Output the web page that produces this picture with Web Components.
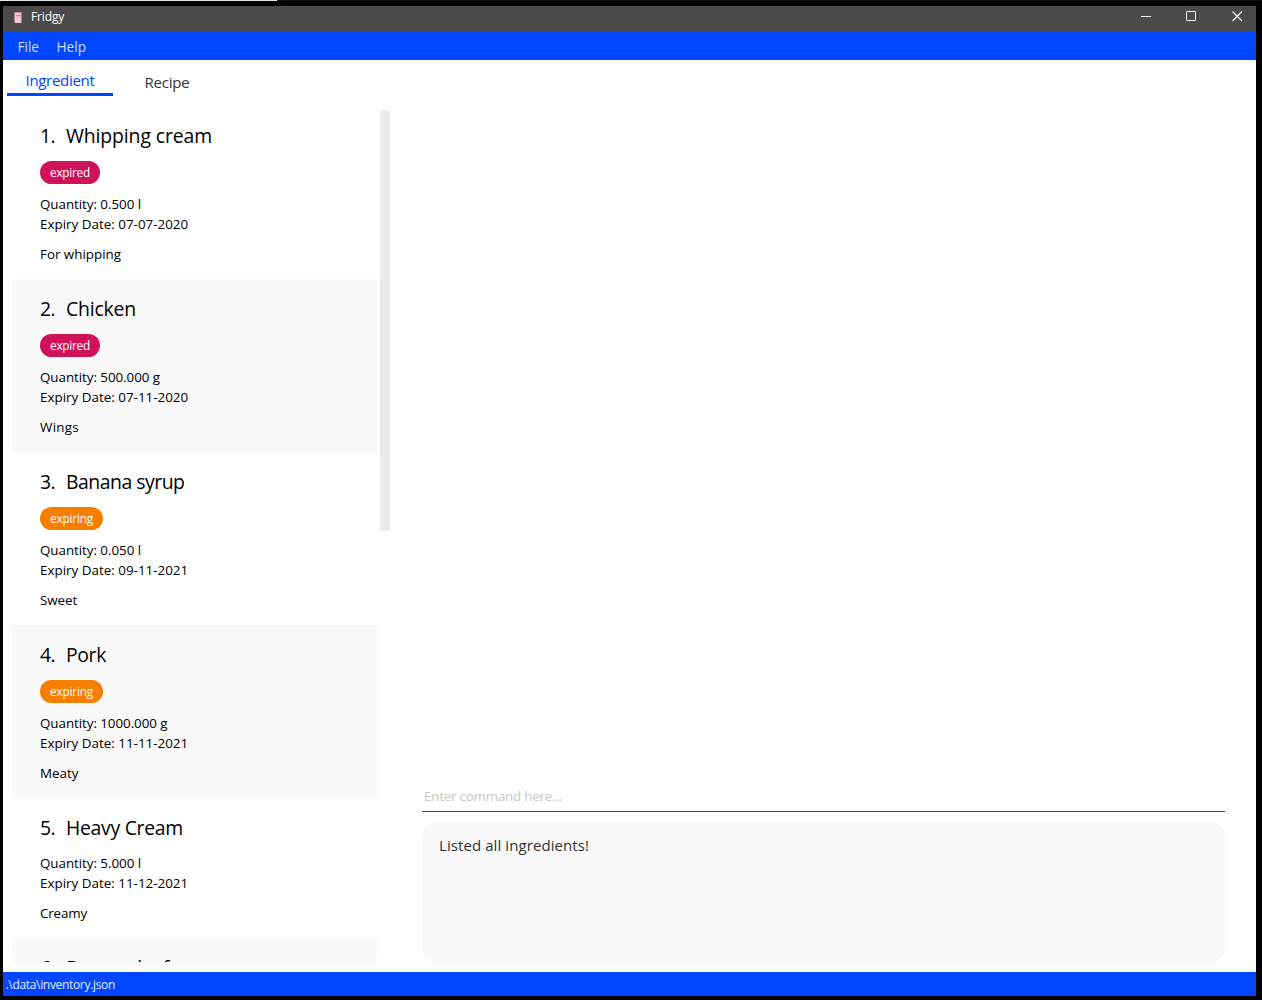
<!DOCTYPE html>
<html lang="en">
<head>
<meta charset="utf-8">
<title>Fridgy</title>
<style>
html,body{margin:0;height:100%;background:#000;overflow:hidden}
body{font-family:"Open Sans","Noto Sans",sans-serif;font-size:13px;color:#000}
</style>
</head>
<body>
<fridgy-app></fridgy-app>
<script>
/* Text run whose advance is tuned to the w attribute (px). */
class FitText extends HTMLElement{
  connectedCallback(){
    if(this.shadowRoot)return;
    this.attachShadow({mode:'open'}).innerHTML='<style>:host{display:block;white-space:pre;width:max-content}</style><slot></slot>';
    const w=parseFloat(this.getAttribute('w'));
    const n=this.textContent.length;
    const natural=this.getBoundingClientRect().width;
    if(w&&natural)this.style.letterSpacing=((w-natural)/n).toFixed(4)+'px';
  }
}
class TitleBar extends HTMLElement{
  connectedCallback(){
    this.attachShadow({mode:'open'}).innerHTML=`<style>
    :host{display:flex;align-items:flex-start;height:26px;flex:none;background:#4c4a48;color:#fff;font-size:12px;line-height:16px;padding-left:10px}
    .icon{margin:5px 7px 0 0}
    fit-text{margin-top:3px}
    .buttons{display:flex;margin:5px 13px 0 auto;gap:35px}
    .buttons svg:last-child{margin-left:1px}
    svg{display:block}
    </style>
    <svg class="icon" width="11" height="13"><rect x="1.5" y="1" width="7.2" height="11" rx="1" fill="#f9c3ce"/><path d="M2 1.4h6M3 4.6h5" stroke="#a27e88" stroke-width=".8" fill="none"/><path d="M8.3 1.5v10.3" stroke="#8d7078" stroke-width=".7"/></svg>
    <fit-text w="33.2">Fridgy</fit-text>
    <div class="buttons">
    <svg width="10" height="11"><path d="M0 5.5h10" stroke="#fff"/></svg>
    <svg width="10" height="11"><rect x=".5" y=".5" width="9" height="9" rx=".6" fill="none" stroke="#fff"/></svg>
    <svg width="11" height="11"><path d="M.5 .5l9.5 9.5M10 .5L.5 10" stroke="#fff" stroke-width="1.1"/></svg>
    </div>`;
  }
}
class MenuBar extends HTMLElement{
  connectedCallback(){
    this.attachShadow({mode:'open'}).innerHTML=`<style>
    :host{display:flex;flex:none;height:28px;background:#0045ff;color:#d0ddff;font-size:13.7px;line-height:29px;padding:0 14.5px;gap:17.5px}
    </style><fit-text w="21.5">File</fit-text><fit-text w="29.5">Help</fit-text>`;
  }
}
class TabStrip extends HTMLElement{
  connectedCallback(){
    this.attachShadow({mode:'open'}).innerHTML=`<style>
    :host{display:flex;flex:none;height:46px;padding-left:4px;gap:13px;align-items:flex-start;font-size:15px;color:#333}
    div{box-sizing:border-box;height:36px;display:flex;justify-content:center;line-height:20px}
    .on{width:106px;padding-top:10px;color:#0045ff;border-bottom:3px solid #0045ff}
    .off{width:82px;padding-top:12px}
    </style><div class="on"><fit-text w="69">Ingredient</fit-text></div><div class="off"><fit-text w="45">Recipe</fit-text></div>`;
  }
}
class StatusTag extends HTMLElement{
  connectedCallback(){
    const k=this.getAttribute('kind');
    this.attachShadow({mode:'open'}).innerHTML=`<style>
    :host{display:block;box-sizing:border-box;width:max-content;height:23px;border-radius:11.5px;padding:0 10px;margin:11px 0 10px;color:#fff;font-size:11.8px;line-height:23px;background:${k==='expired'?'#d0125b':'#f77f00'}}
    </style><fit-text w="${k==='expired'?40:43}">${k}</fit-text>`;
  }
}
class IngredientCard extends HTMLElement{
  connectedCallback(){
    const a=n=>this.getAttribute(n)||'';
    const k=a('kind');
    this.attachShadow({mode:'open'}).innerHTML=`<style>
    :host{display:block;box-sizing:border-box;flex:none;height:${k?173:140}px;padding:16px 28px 0}
    :host(:nth-of-type(even)){background:#f9f9f9}
    .head{display:flex;height:28px;font-size:19.4px;line-height:28px;margin-bottom:${k?0:11}px}
    .no{width:26px}
    .line{height:20px;line-height:20px;font-size:13.4px}
    .note{margin-top:10px}
    </style>
    <div class="head"><div class="no"><fit-text w="15">${a('no')}.</fit-text></div><fit-text w="${a('nw')}">${a('name')}</fit-text></div>
    ${k?`<status-tag kind="${k}"></status-tag>`:''}
    ${a('qty')?`<div class="line"><fit-text w="${a('qw')}">Quantity: ${a('qty')}</fit-text></div>
    <div class="line"><fit-text w="148.2">Expiry Date: ${a('date')}</fit-text></div>
    <div class="line note"><fit-text w="${a('tw')}">${a('note')}</fit-text></div>`:''}`;
  }
}
class IngredientList extends HTMLElement{
  connectedCallback(){
    this.attachShadow({mode:'open'}).innerHTML=`<style>
    :host{display:flex;flex:none;width:387px;height:856px;box-sizing:border-box;padding-left:9px;gap:3px}
    .cards{width:365px;height:100%;overflow:hidden;display:flex;flex-direction:column}
    .bar{width:10px;height:421px;margin-top:4px;border-radius:3px;background:#eaeaea}
    </style>
    <div class="cards"><slot></slot></div><div class="bar"></div>`;
  }
}
class CommandPane extends HTMLElement{
  connectedCallback(){
    this.attachShadow({mode:'open'}).innerHTML=`<style>
    :host{display:flex;flex-direction:column;justify-content:flex-end;width:803px;height:856px}
    .cmd{height:26px;line-height:22px;font-size:13.4px;color:#c8c8c8;border-bottom:1px solid #0045ff;padding-left:2px}
    .out{box-sizing:border-box;margin-top:10px;height:140px;border-radius:15px;background:#f9f9f9;color:#333;font-size:15px;line-height:20px;padding:13px 17px}
    </style>
    <div class="cmd"><fit-text w="138">Enter command here...</fit-text></div>
    <div class="out"><fit-text w="150">Listed all ingredients!</fit-text></div>`;
  }
}
class StatusBar extends HTMLElement{
  connectedCallback(){
    this.attachShadow({mode:'open'}).innerHTML=`<style>
    :host{display:block;flex:none;height:24px;background:#0045ff;color:#e6edff;font-size:12px;line-height:26px;padding-left:2.5px}
    </style><fit-text w="109.5">.\\data\\inventory.json</fit-text>`;
  }
}
class FridgyApp extends HTMLElement{
  connectedCallback(){
    this.attachShadow({mode:'open'}).innerHTML=`<style>
    :host{display:flex;flex-direction:column;box-sizing:border-box;width:1262px;height:1000px;background:#000}
    .edge{display:flex;flex:none;height:1px;background:#0d1117;margin-bottom:5px}
    .edge::before{content:"";width:277px;background:#e4ece6}
    .win{display:flex;flex-direction:column;width:1253px;height:990px;margin-left:3px;background:#fff}
    .main{display:flex;height:866px;gap:32px}
    </style>
    <div class="edge"></div>
    <div class="win">
    <title-bar></title-bar><menu-bar></menu-bar><tab-strip></tab-strip>
    <div class="main">
    <ingredient-list>
    <ingredient-card no="1" name="Whipping cream" nw="146" kind="expired" qty="0.500 l" qw="101" date="07-07-2020" note="For whipping" tw="81"></ingredient-card>
    <ingredient-card no="2" name="Chicken" nw="70" kind="expired" qty="500.000 g" qw="120" date="07-11-2020" note="Wings" tw="39"></ingredient-card>
    <ingredient-card no="3" name="Banana syrup" nw="118.5" kind="expiring" qty="0.050 l" qw="101" date="09-11-2021" note="Sweet" tw="37.2"></ingredient-card>
    <ingredient-card no="4" name="Pork" nw="40" kind="expiring" qty="1000.000 g" qw="127.5" date="11-11-2021" note="Meaty" tw="38.5"></ingredient-card>
    <ingredient-card no="5" name="Heavy Cream" nw="117" qty="5.000 l" qw="101" date="11-12-2021" note="Creamy" tw="47"></ingredient-card>
    <ingredient-card no="6" name="Banana leaf" nw="103"></ingredient-card>
    </ingredient-list>
    <command-pane></command-pane>
    </div>
    <status-bar></status-bar>
    </div>`;
  }
}
customElements.define('fridgy-app',FridgyApp);
customElements.define('title-bar',TitleBar);
customElements.define('menu-bar',MenuBar);
customElements.define('tab-strip',TabStrip);
customElements.define('ingredient-list',IngredientList);
customElements.define('ingredient-card',IngredientCard);
customElements.define('status-tag',StatusTag);
customElements.define('command-pane',CommandPane);
customElements.define('status-bar',StatusBar);
customElements.define('fit-text',FitText);
</script>
</body>
</html>
